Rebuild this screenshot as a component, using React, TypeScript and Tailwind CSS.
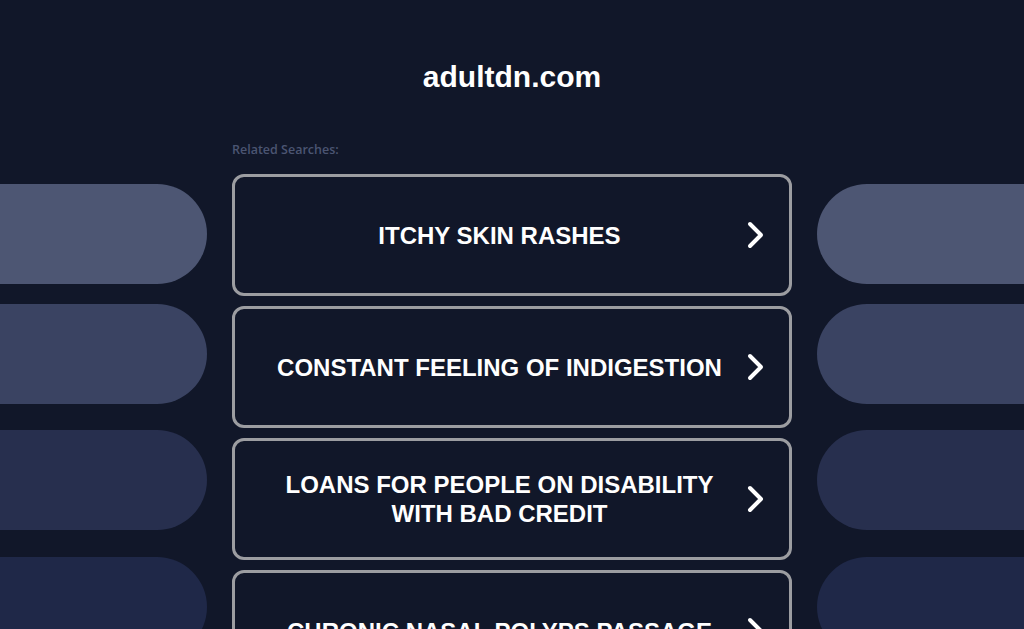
import React from 'react'

const searches = [
  'ITCHY SKIN RASHES',
  'CONSTANT FEELING OF INDIGESTION',
  'LOANS FOR PEOPLE ON DISABILITY WITH BAD CREDIT',
  'CHRONIC NASAL POLYPS PASSAGE',
]

function Chevron() {
  return (
    <svg width="20" height="28" viewBox="0 0 20 28" fill="none">
      <path d="M5 3 L16 14 L5 25" stroke="white" strokeWidth="4" strokeLinecap="round" strokeLinejoin="round" />
    </svg>
  )
}

function SidePills({ side }: { side: 'left' | 'right' }) {
  const round = side === 'left' ? 'rounded-r-full' : 'rounded-l-full'
  return (
    <div className="flex flex-col pt-[42px]">
      <div className={`h-[100px] bg-[#4d5673] ${round}`} />
      <div className={`h-[100px] mt-[20px] bg-[#3a4362] ${round}`} />
      <div className={`h-[100px] mt-[26px] bg-[#272f4e] ${round}`} />
      <div className={`h-[100px] mt-[27px] bg-[#1f2848] ${round}`} />
    </div>
  )
}

export default function App() {
  return (
    <div className="min-h-screen bg-[#111729] font-['Liberation_Sans',Arial,sans-serif] overflow-hidden">
      {/* 도메인 */}
      <h1 className="pt-[59px] h-[95px] text-center text-[30px] leading-[36px] font-bold text-white">
        adultdn.com
      </h1>

      <div className="mt-[47px] flex">
        <div className="w-[207px] shrink-0">
          <SidePills side="left" />
        </div>

        <div className="ml-[25px] w-[560px] shrink-0">
          <p className="h-[16px] mb-[16px] text-[12.5px] leading-[16px] font-semibold text-[#4b5572] font-['Open_Sans',sans-serif]">
            Related Searches:
          </p>
          <div className="flex flex-col gap-[10px]">
            {searches.map((s) => (
              <div
                key={s}
                className="h-[122px] flex items-center border-[3px] border-[#9c9da1] rounded-[12px] bg-[#111729] pl-[27px] pr-[16px]"
              >
                <span className="flex-1 text-center text-white font-bold text-[24px] leading-[29px]">
                  {s}
                </span>
                <span className="w-[36px] flex justify-center">
                  <Chevron />
                </span>
              </div>
            ))}
          </div>
        </div>

        <div className="ml-[25px] flex-1">
          <SidePills side="right" />
        </div>
      </div>
    </div>
  )
}
